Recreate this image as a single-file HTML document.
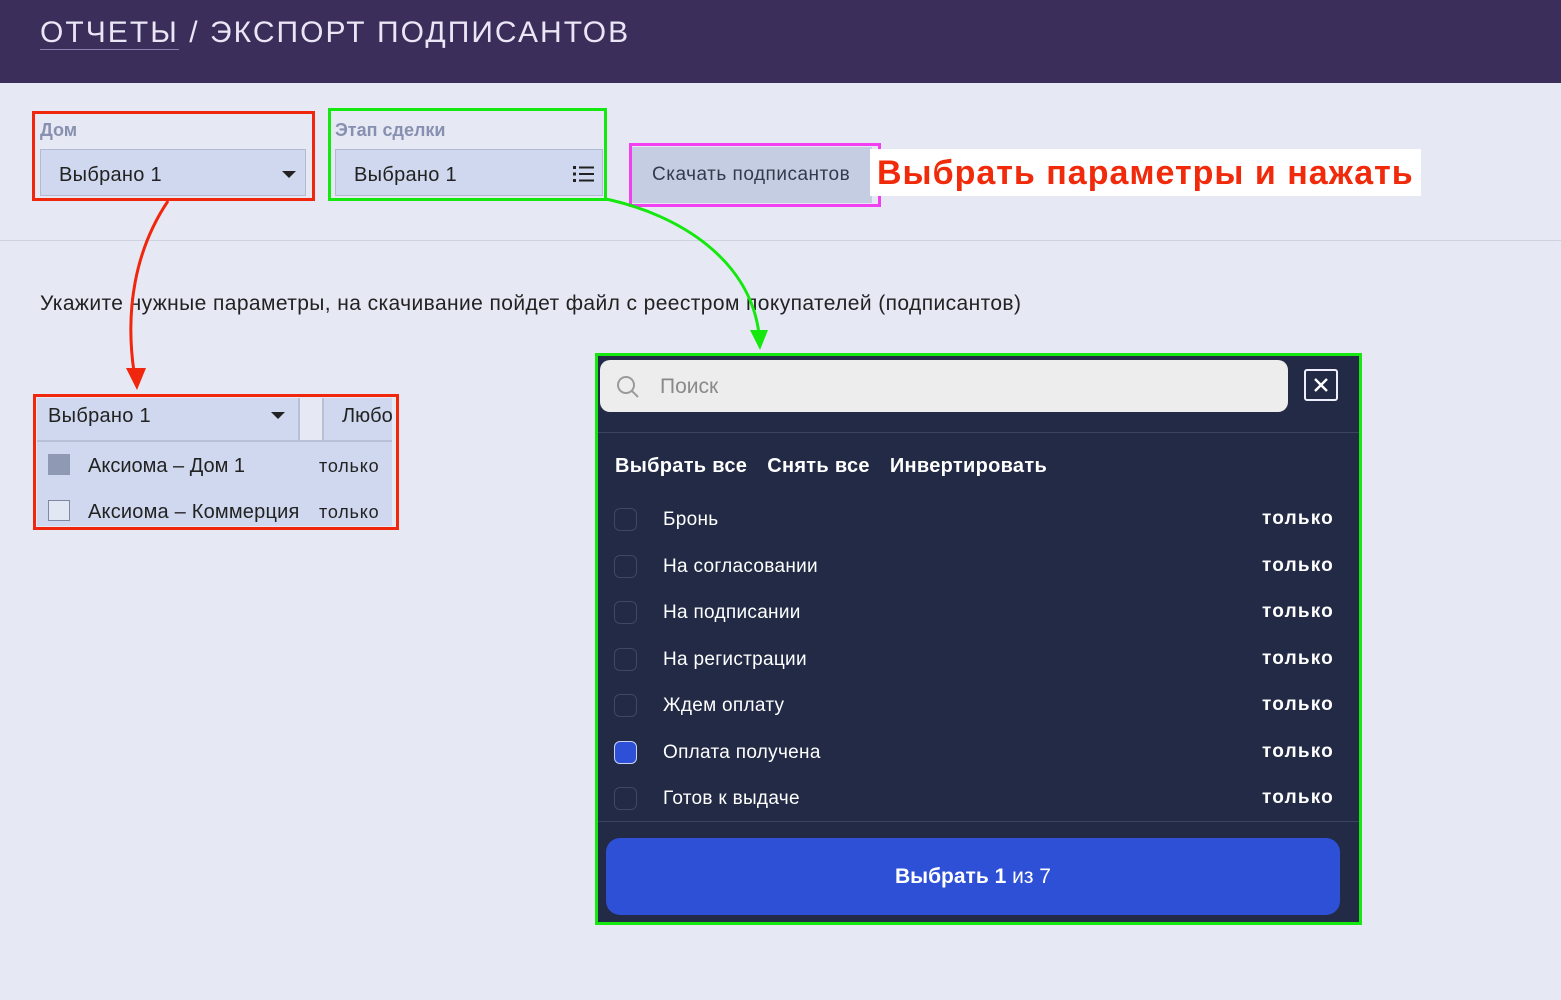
<!DOCTYPE html>
<html><head><meta charset="utf-8"><style>
*{margin:0;padding:0;box-sizing:border-box}
body{width:1561px;height:1000px;background:#e6e9f4;font-family:"Liberation Sans","DejaVu Sans",sans-serif;position:relative;overflow:hidden}
.a{position:absolute}
.hdr{left:0;top:0;width:1561px;height:83px;background:#3c2e5b}
.ttl{left:40px;top:16px;font-size:30px;color:#ebe6f5;letter-spacing:2.05px;white-space:nowrap}
.ttl u{text-decoration:none;border-bottom:1.5px solid #8a7fb3}
.lbl{font-size:18px;font-weight:bold;color:#8790b0}
.sel{background:#cfd8ee;border:1px solid #b3bbd3;font-size:20px;color:#222;padding-left:18px;line-height:50px;letter-spacing:0.3px}
.tri{width:0;height:0;border-left:7px solid transparent;border-right:7px solid transparent;border-top:7px solid #222}
.row{color:#fff;font-size:19px;letter-spacing:0.3px}
.cb{width:23px;height:23px;border:1.5px solid #3d4866;border-radius:6px}
.only{right:0;font-weight:bold;font-size:19px;letter-spacing:1.2px}
</style></head><body>
<div class="a hdr"></div>
<div class="a ttl"><u>ОТЧЕТЫ</u> / ЭКСПОРТ ПОДПИСАНТОВ</div>

<div class="a lbl" style="left:40px;top:120px">Дом</div>
<div class="a sel" style="left:40px;top:149px;width:266px;height:47px">Выбрано 1</div>
<div class="a tri" style="left:282px;top:171px"></div>
<div class="a" style="left:32px;top:111px;width:283px;height:90px;border:3px solid #f0260d"></div>

<div class="a lbl" style="left:335px;top:120px">Этап сделки</div>
<div class="a sel" style="left:335px;top:149px;width:268px;height:47px">Выбрано 1</div>
<svg class="a" style="left:572px;top:164px" width="24" height="20"><g fill="#222"><rect x="1" y="2" width="3" height="3"/><rect x="1" y="8.5" width="3" height="3"/><rect x="1" y="15" width="3" height="3"/><rect x="7" y="2.5" width="15" height="2"/><rect x="7" y="9" width="15" height="2"/><rect x="7" y="15.5" width="15" height="2"/></g></svg>
<div class="a" style="left:328px;top:108px;width:279px;height:93px;border:3px solid #14e80f"></div>

<div class="a" style="left:632px;top:147px;width:240px;height:56px;background:#c5cde3;font-size:19px;letter-spacing:0.5px;color:#333a4d;line-height:56px;padding-left:20px;white-space:nowrap">Скачать подписантов</div>
<div class="a" style="left:629px;top:143px;width:252px;height:64px;border:3px solid #f23ff0"></div>
<div class="a" style="left:870px;top:149px;width:551px;height:47px;background:#fff;color:#f02a0a;font-weight:bold;font-size:34px;letter-spacing:1px;line-height:48px;padding-left:7px;white-space:nowrap">Выбрать параметры и нажать</div>

<div class="a" style="left:0;top:240px;width:1561px;height:1px;background:#cdd2e0"></div>
<div class="a" style="left:40px;top:292px;font-size:21px;letter-spacing:0.4px;color:#222;white-space:nowrap">Укажите нужные параметры, на скачивание пойдет файл с реестром покупателей (подписантов)</div>

<div class="a" style="left:37px;top:398px;width:261px;height:42px;background:#cfd8ee;font-size:20px;color:#222;padding-left:11px;line-height:36px;letter-spacing:0.3px">Выбрано 1</div>
<div class="a tri" style="left:271px;top:412px"></div>
<div class="a" style="left:298px;top:398px;width:2px;height:42px;background:#b8c0d8"></div>
<div class="a" style="left:322px;top:398px;width:70px;height:42px;background:#cfd8ee;border-left:2px solid #b8c0d8;font-size:20px;color:#222;padding-left:18px;line-height:36px;overflow:hidden;white-space:nowrap">Любой</div>
<div class="a" style="left:37px;top:440px;width:355px;height:86px;background:#cfd8ee;border-top:2px solid #b8c0d8"></div>
<div class="a" style="left:48px;top:454px;width:22px;height:21px;background:#9099b3"></div>
<div class="a" style="left:48px;top:500px;width:22px;height:21px;border:1px solid #7f88a3;background:#e2e7f4"></div>
<div class="a" style="left:88px;top:455px;font-size:20px;color:#222">Аксиома – Дом 1</div>
<div class="a" style="left:88px;top:501px;font-size:20px;color:#222;white-space:nowrap;letter-spacing:0.2px">Аксиома – Коммерция</div>
<div class="a" style="left:319px;top:456px;font-size:18px;color:#222;letter-spacing:0.8px">только</div>
<div class="a" style="left:319px;top:502px;font-size:18px;color:#222;letter-spacing:0.8px">только</div>
<div class="a" style="left:33px;top:394px;width:366px;height:136px;border:3px solid #f0260d"></div>

<div class="a" style="left:595px;top:353px;width:767px;height:572px;background:#222a45;border:3px solid #14e80f"></div>
<div class="a" style="left:600px;top:360px;width:688px;height:52px;background:#ededed;border-radius:10px"></div>
<svg class="a" style="left:615px;top:374px" width="26" height="26"><circle cx="11" cy="11" r="8" fill="none" stroke="#9a9a9a" stroke-width="2"/><line x1="17" y1="17" x2="23" y2="23" stroke="#9a9a9a" stroke-width="2"/></svg>
<div class="a" style="left:660px;top:375px;font-size:21px;color:#8a8a8a">Поиск</div>
<div class="a" style="left:1304px;top:369px;width:34px;height:32px;border:2px solid #eef;border-radius:3px"></div>
<svg class="a" style="left:1304px;top:369px" width="34" height="32"><path d="M11 10L23 22M23 10L11 22" stroke="#fff" stroke-width="2.4"/></svg>
<div class="a" style="left:598px;top:432px;width:761px;height:1px;background:#3a4461"></div>
<div class="a" style="left:615px;top:455px;font-size:20px;font-weight:bold;color:#fff;letter-spacing:0.3px;white-space:nowrap">Выбрать все<span style="margin-left:20px">Снять все</span><span style="margin-left:20px">Инвертировать</span></div>

<div class="a" style="left:614px;top:508px;width:720px;height:330px">
 <div class="a cb" style="top:0"></div><div class="a row" style="left:49px;top:1px">Бронь</div><div class="a row only" style="top:0">только</div>
 <div class="a cb" style="top:47px"></div><div class="a row" style="left:49px;top:48px">На согласовании</div><div class="a row only" style="top:47px">только</div>
 <div class="a cb" style="top:93px"></div><div class="a row" style="left:49px;top:94px">На подписании</div><div class="a row only" style="top:93px">только</div>
 <div class="a cb" style="top:140px"></div><div class="a row" style="left:49px;top:141px">На регистрации</div><div class="a row only" style="top:140px">только</div>
 <div class="a cb" style="top:186px"></div><div class="a row" style="left:49px;top:187px">Ждем оплату</div><div class="a row only" style="top:186px">только</div>
 <div class="a cb" style="top:233px;background:#2e50d6;border-color:#c9d2f5"></div><div class="a row" style="left:49px;top:234px">Оплата получена</div><div class="a row only" style="top:233px">только</div>
 <div class="a cb" style="top:279px"></div><div class="a row" style="left:49px;top:280px">Готов к выдаче</div><div class="a row only" style="top:279px">только</div>
</div>
<div class="a" style="left:598px;top:821px;width:761px;height:1px;background:#3a4461"></div>
<div class="a" style="left:606px;top:838px;width:734px;height:77px;background:#2e50d6;border-radius:14px;color:#fff;font-size:21px;text-align:center;line-height:78px"><b>Выбрать 1</b> из 7</div>

<svg class="a" style="left:0;top:0" width="1561" height="1000">
<path d="M168 201 C135 250 125 310 134 372" fill="none" stroke="#f0260d" stroke-width="3"/>
<path d="M126 368 L137 390 L146 368 Z" fill="#f0260d"/>
<path d="M606 199 C680 215 750 260 759 334" fill="none" stroke="#14e80f" stroke-width="3"/>
<path d="M750 330 L760 350 L768 330 Z" fill="#14e80f"/>
</svg>
</body></html>
